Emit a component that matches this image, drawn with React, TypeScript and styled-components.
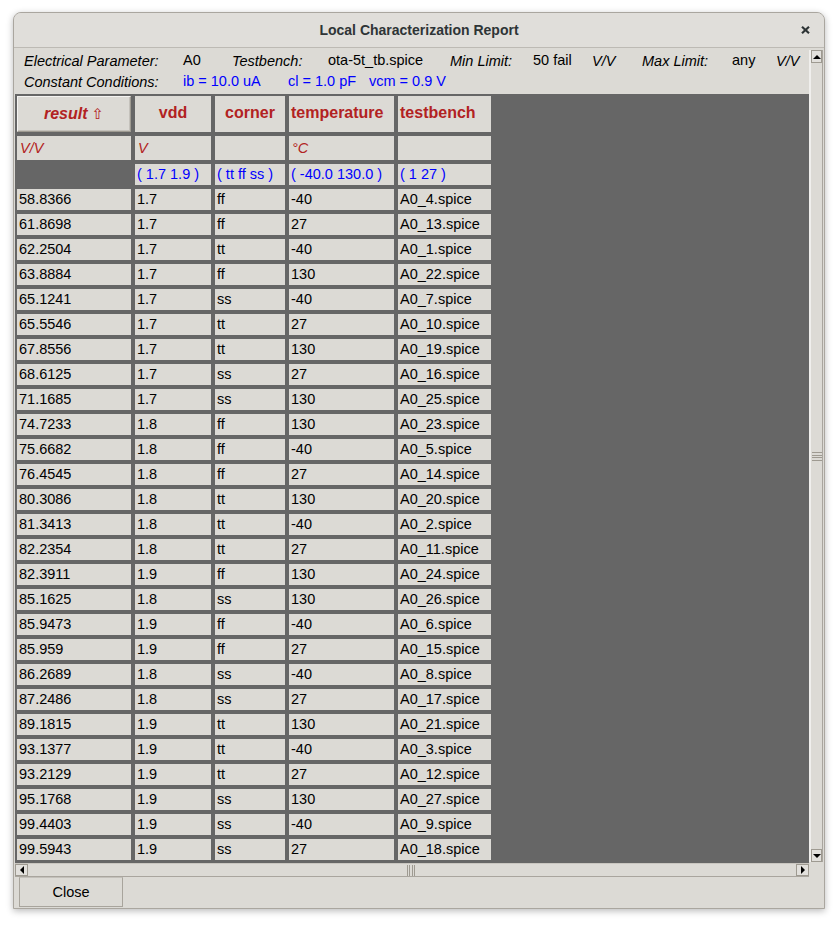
import React from "react";
import styled, { createGlobalStyle } from "styled-components";

const GlobalStyle = createGlobalStyle`
  html, body {
    margin: 0;
    padding: 0;
    background: #ffffff;
  }
  body {
    font-family: "Liberation Sans", Arial, sans-serif;
  }
`;

type Row = [string, string, string, string, string];

const ROWS: Row[] = [
  ["58.8366", "1.7", "ff", "-40", "A0_4.spice"],
  ["61.8698", "1.7", "ff", "27", "A0_13.spice"],
  ["62.2504", "1.7", "tt", "-40", "A0_1.spice"],
  ["63.8884", "1.7", "ff", "130", "A0_22.spice"],
  ["65.1241", "1.7", "ss", "-40", "A0_7.spice"],
  ["65.5546", "1.7", "tt", "27", "A0_10.spice"],
  ["67.8556", "1.7", "tt", "130", "A0_19.spice"],
  ["68.6125", "1.7", "ss", "27", "A0_16.spice"],
  ["71.1685", "1.7", "ss", "130", "A0_25.spice"],
  ["74.7233", "1.8", "ff", "130", "A0_23.spice"],
  ["75.6682", "1.8", "ff", "-40", "A0_5.spice"],
  ["76.4545", "1.8", "ff", "27", "A0_14.spice"],
  ["80.3086", "1.8", "tt", "130", "A0_20.spice"],
  ["81.3413", "1.8", "tt", "-40", "A0_2.spice"],
  ["82.2354", "1.8", "tt", "27", "A0_11.spice"],
  ["82.3911", "1.9", "ff", "130", "A0_24.spice"],
  ["85.1625", "1.8", "ss", "130", "A0_26.spice"],
  ["85.9473", "1.9", "ff", "-40", "A0_6.spice"],
  ["85.959", "1.9", "ff", "27", "A0_15.spice"],
  ["86.2689", "1.8", "ss", "-40", "A0_8.spice"],
  ["87.2486", "1.8", "ss", "27", "A0_17.spice"],
  ["89.1815", "1.9", "tt", "130", "A0_21.spice"],
  ["93.1377", "1.9", "tt", "-40", "A0_3.spice"],
  ["93.2129", "1.9", "tt", "27", "A0_12.spice"],
  ["95.1768", "1.9", "ss", "130", "A0_27.spice"],
  ["99.4403", "1.9", "ss", "-40", "A0_9.spice"],
  ["99.5943", "1.9", "ss", "27", "A0_18.spice"],
];

const HEADERS: { text: string; align: "center" | "left" }[] = [
  { text: "vdd", align: "center" },
  { text: "corner", align: "center" },
  { text: "temperature", align: "left" },
  { text: "testbench", align: "left" },
];

const Page = styled.div`
  width: 838px;
  height: 925px;
  box-sizing: border-box;
  padding: 12px 0 0 13px;
`;

const Window = styled.div`
  width: 812px;
  height: 897px;
  box-sizing: border-box;
  border: 1px solid #aaa69f;
  border-radius: 8px 8px 0 0;
  background: #dcdad5;
  box-shadow: 0 2px 7px rgba(0, 0, 0, 0.28);
  display: flex;
  flex-direction: column;
  overflow: hidden;
`;

const TitleBar = styled.div`
  height: 34px;
  flex: none;
  display: grid;
  grid-template-columns: 1fr auto 1fr;
  align-items: center;
  background: #e0deda;
  border-bottom: 1px solid #bdbab4;
  color: #2e3436;
  font: bold 14px "Liberation Sans", Arial, sans-serif;
`;

const Title = styled.div`
  grid-column: 2;
`;

const CloseX = styled.div`
  grid-column: 3;
  justify-self: end;
  margin-right: 14px;
  display: flex;
`;

const ScrollPane = styled.div`
  flex: none;
  display: flex;
  flex-direction: column;
`;

const UpperRow = styled.div`
  height: 815px;
  display: flex;
`;

const Canvas = styled.div`
  width: 795px;
  box-sizing: border-box;
  padding-left: 1px;
  display: flex;
  flex-direction: column;
`;

const Info = styled.div`
  height: 46px;
  box-sizing: border-box;
  padding: 2px 0 2px 9px;
  display: flex;
  flex-direction: column;
  font-size: 14.5px;
  color: #000;
`;

const InfoRow = styled.div<{ $cols: string; $h: number }>`
  height: ${(p) => p.$h}px;
  display: grid;
  grid-template-columns: ${(p) => p.$cols};
  align-items: center;
  white-space: nowrap;
`;

const Label = styled.span`
  font-style: italic;
`;

const Value = styled.span<{ $blue?: boolean }>`
  color: ${(p) => (p.$blue ? "#0000ff" : "#000")};
  padding-bottom: 3px;
`;

const Viewport = styled.div`
  flex: 1;
  background: #666666;
  box-sizing: border-box;
  padding: 2px 0 0 2px;
  overflow: hidden;
`;

const Grid = styled.div`
  display: grid;
  grid-template-columns: 114px 76px 70px 105px 93px;
  grid-template-rows: 36px 24px 21px;
  grid-auto-rows: 21px;
  gap: 4px;
  align-content: start;
  justify-content: start;
  font-size: 14.5px;
`;

const Cell = styled.div<{ $kind: "data" | "unit" | "range" }>`
  background: #dcdad5;
  display: flex;
  align-items: center;
  padding: 0 ${(p) => (p.$kind === "unit" ? 3 : 2)}px ${(p) => (p.$kind === "unit" ? 0 : 2)}px;
  box-sizing: border-box;
  white-space: nowrap;
  overflow: hidden;
  color: ${(p) => (p.$kind === "unit" ? "#b22222" : p.$kind === "range" ? "#0000ff" : "#000")};
  font-style: ${(p) => (p.$kind === "unit" ? "italic" : "normal")};
`;

const HeadCell = styled.div<{ $align: "center" | "left" }>`
  background: #dcdad5;
  display: flex;
  align-items: center;
  justify-content: ${(p) => (p.$align === "center" ? "center" : "flex-start")};
  padding: 0 2px 3px;
  box-sizing: border-box;
  color: #b22222;
  font-weight: bold;
  font-size: 16px;
  white-space: nowrap;
`;

const SortButton = styled.div`
  background: #dcdad5;
  border: 1px solid;
  border-color: #f4f3f1 #9e9a91 #9e9a91 #f4f3f1;
  box-shadow: inset -1px -1px 0 #c4c1bb;
  display: flex;
  align-items: center;
  justify-content: center;
  color: #b22222;
  font-weight: bold;
  font-style: italic;
  font-size: 16px;
  white-space: nowrap;
`;

const Arrow = styled.span`
  font-family: "DejaVu Sans", sans-serif;
  font-style: normal;
  font-weight: normal;
  font-size: 15px;
  margin-left: 4px;
`;

const Blank = styled.div``;

const VScroll = styled.div`
  width: 14px;
  flex: none;
  margin: 2px 1px 1px 0;
  display: flex;
  flex-direction: column;
  border-left: 2px solid #f0efed;
  border-right: 1px solid #a9a59e;
  box-sizing: border-box;
`;

const HScrollRow = styled.div`
  height: 14px;
  display: flex;
`;

const HScroll = styled.div`
  width: 794px;
  margin-left: 1px;
  display: flex;
  border-top: 1px solid #c9c6c0;
  border-bottom: 1px solid #a9a59e;
  box-sizing: border-box;
`;

const ArrowBox = styled.div<{ $dir: "up" | "down" | "left" | "right" }>`
  flex: none;
  width: ${(p) => (p.$dir === "up" || p.$dir === "down" ? "auto" : "13px")};
  height: ${(p) => (p.$dir === "up" || p.$dir === "down" ? "13px" : "auto")};
  border: 1px solid #9e9a91;
  box-sizing: border-box;
  background: #e2e0dc;
  display: flex;
  align-items: center;
  justify-content: center;
`;

const Triangle = styled.div<{ $dir: "up" | "down" | "left" | "right" }>`
  width: 0;
  height: 0;
  ${(p) =>
    p.$dir === "up"
      ? "border-left: 4px solid transparent; border-right: 4px solid transparent; border-bottom: 4px solid #000;"
      : p.$dir === "down"
      ? "border-left: 4px solid transparent; border-right: 4px solid transparent; border-top: 4px solid #000;"
      : p.$dir === "left"
      ? "border-top: 4px solid transparent; border-bottom: 4px solid transparent; border-right: 4px solid #000;"
      : "border-top: 4px solid transparent; border-bottom: 4px solid transparent; border-left: 4px solid #000;"}
`;

const Thumb = styled.div`
  flex: 1;
  display: flex;
  align-items: center;
  justify-content: center;
  background: #dcdad5;
`;

const GripH = styled.div`
  width: 10px;
  height: 9px;
  background: repeating-linear-gradient(to bottom, #9e9a91 0 1px, transparent 1px 2.5px);
`;

const GripV = styled.div`
  width: 10px;
  height: 11px;
  background: repeating-linear-gradient(to right, #9e9a91 0 1px, transparent 1px 2.5px);
`;

const Corner = styled.div`
  flex: 1;
`;

const Footer = styled.div`
  height: 31px;
  flex: none;
  padding-left: 5px;
  display: flex;
  align-items: flex-start;
`;

const Button = styled.div`
  width: 104px;
  height: 30px;
  box-sizing: border-box;
  border: 1px solid #a8a49c;
  border-top-color: #c3c0ba;
  background: #dcdad5;
  display: flex;
  align-items: center;
  justify-content: center;
  padding-bottom: 1px;
  font-size: 14.5px;
  color: #000;
`;

function ScrollArrow({ dir }: { dir: "up" | "down" | "left" | "right" }) {
  return (
    <ArrowBox $dir={dir}>
      <Triangle $dir={dir} />
    </ArrowBox>
  );
}

export default function App() {
  return (
    <Page>
      <GlobalStyle />
      <Window>
        <TitleBar>
          <Title>Local Characterization Report</Title>
          <CloseX>
            <svg width="9" height="8" viewBox="0 0 9 8">
              <path d="M1 0.8 L8 7.2 M8 0.8 L1 7.2" stroke="#2e3436" strokeWidth="2.2" strokeLinecap="butt" />
            </svg>
          </CloseX>
        </TitleBar>
        <ScrollPane>
          <UpperRow>
            <Canvas>
              <Info>
                <InfoRow $h={22} $cols="159px 49px 96px 122px 83px 59px 50px 90px 44px auto">
                  <Label>Electrical Parameter:</Label>
                  <Value>A0</Value>
                  <Label>Testbench:</Label>
                  <Value>ota-5t_tb.spice</Value>
                  <Label>Min Limit:</Label>
                  <Value>50 fail</Value>
                  <Label>V/V</Label>
                  <Label>Max Limit:</Label>
                  <Value>any</Value>
                  <Label>V/V</Label>
                </InfoRow>
                <InfoRow $h={20} $cols="159px 105px 81px auto">
                  <Label>Constant Conditions:</Label>
                  <Value $blue>ib = 10.0 uA</Value>
                  <Value $blue>cl = 1.0 pF</Value>
                  <Value $blue>vcm = 0.9 V</Value>
                </InfoRow>
              </Info>
              <Viewport>
                <Grid>
                  <SortButton>
                    result<Arrow>⇧</Arrow>
                  </SortButton>
                  {HEADERS.map((h) => (
                    <HeadCell key={h.text} $align={h.align}>
                      {h.text}
                    </HeadCell>
                  ))}
                  <Cell $kind="unit">V/V</Cell>
                  <Cell $kind="unit">V</Cell>
                  <Cell $kind="unit" />
                  <Cell $kind="unit">°C</Cell>
                  <Cell $kind="unit" />
                  <Blank />
                  <Cell $kind="range">( 1.7 1.9 )</Cell>
                  <Cell $kind="range">( tt ff ss )</Cell>
                  <Cell $kind="range">( -40.0 130.0 )</Cell>
                  <Cell $kind="range">( 1 27 )</Cell>
                  {ROWS.map((r, i) =>
                    r.map((v, j) => (
                      <Cell key={`r${i}c${j}`} $kind="data">
                        {v}
                      </Cell>
                    ))
                  )}
                </Grid>
              </Viewport>
            </Canvas>
            <VScroll>
              <ScrollArrow dir="up" />
              <Thumb>
                <GripH />
              </Thumb>
              <ScrollArrow dir="down" />
            </VScroll>
          </UpperRow>
          <HScrollRow>
            <HScroll>
              <ScrollArrow dir="left" />
              <Thumb>
                <GripV />
              </Thumb>
              <ScrollArrow dir="right" />
            </HScroll>
            <Corner />
          </HScrollRow>
        </ScrollPane>
        <Footer>
          <Button>Close</Button>
        </Footer>
      </Window>
    </Page>
  );
}
